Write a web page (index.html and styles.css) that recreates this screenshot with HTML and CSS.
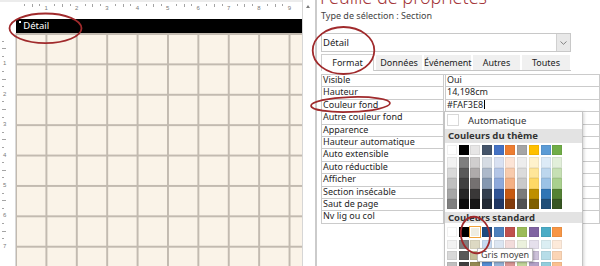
FILE: index.html
```html
<!DOCTYPE html>
<html lang="fr">
<head>
<meta charset="utf-8">
<title>Feuille de propriétés</title>
<link rel="stylesheet" href="styles.css">
</head>
<body>
<div class="screen">

  <!-- design view: rulers, section band, grid -->
  <section class="design">
    <div class="corner"></div>
    <div class="hruler">
      <span class="hseg"><b>1</b></span>
      <span class="hseg"><b>2</b></span>
      <span class="hseg"><b>3</b></span>
      <span class="hseg"><b>4</b></span>
      <span class="hseg"><b>5</b></span>
      <span class="hseg"><b>6</b></span>
      <span class="hseg"><b>7</b></span>
      <span class="hseg"><b>8</b></span>
      <span class="hseg"><b>9</b></span>
    </div>
    <div class="band"><span class="band-dot"></span>Détail</div>
    <div class="vruler">
      <span class="vseg"><b>1</b></span>
      <span class="vseg"><b>2</b></span>
      <span class="vseg"><b>3</b></span>
      <span class="vseg"><b>4</b></span>
      <span class="vseg"><b>5</b></span>
      <span class="vseg"><b>6</b></span>
      <span class="vseg"><b>7</b></span>
    </div>
    <div class="grid"></div>
  </section>

  <div class="vscroll"><span class="vscroll-up"></span></div>

  <!-- property sheet -->
  <section class="props">
    <h1 class="props-title">Feuille de propriétés</h1>
    <p class="sel-type">Type de sélection : Section</p>

    <div class="combo">
      <span class="combo-value">Détail</span>
      <span class="combo-btn">
        <svg width="7" height="4" viewBox="0 0 7 4"><polyline points="0.5,0.5 3.5,3.3 6.5,0.5" fill="none" stroke="#777" stroke-width="0.9"/></svg>
      </span>
    </div>

    <div class="tabs">
      <span class="tab tab-active">Format</span>
      <span class="tab tab-w46">Données</span>
      <span class="tab tab-w47">Événement</span>
      <span class="tab tab-w47">Autres</span>
      <span class="tab tab-w48">Toutes</span>
    </div>

    <div class="sheet">
      <div class="prop"><span class="prop-name">Visible</span><span class="prop-value">Oui</span></div>
      <div class="prop"><span class="prop-name">Hauteur</span><span class="prop-value">14,198cm</span></div>
      <div class="prop"><span class="prop-name">Couleur fond</span><span class="prop-value">#FAF3E8<i class="caret"></i></span></div>
      <div class="prop"><span class="prop-name">Autre couleur fond</span><span class="prop-value"></span></div>
      <div class="prop"><span class="prop-name">Apparence</span><span class="prop-value"></span></div>
      <div class="prop"><span class="prop-name">Hauteur automatique</span><span class="prop-value"></span></div>
      <div class="prop"><span class="prop-name">Auto extensible</span><span class="prop-value"></span></div>
      <div class="prop"><span class="prop-name">Auto réductible</span><span class="prop-value"></span></div>
      <div class="prop"><span class="prop-name">Afficher</span><span class="prop-value"></span></div>
      <div class="prop"><span class="prop-name">Section insécable</span><span class="prop-value"></span></div>
      <div class="prop"><span class="prop-name">Saut de page</span><span class="prop-value"></span></div>
      <div class="prop"><span class="prop-name">Nv lig ou col</span><span class="prop-value"></span></div>
    </div>

    <!-- colour picker drop-down -->
    <div class="picker">
      <div class="auto"><span class="auto-box"></span><span class="auto-label">Automatique</span></div>

      <div class="pick-head">Couleurs du thème</div>
      <div class="swatches swatches-base">
        <span style="background:#FFFFFF"></span><span style="background:#000000"></span><span style="background:#E7E6E6"></span><span style="background:#44546A"></span><span style="background:#4472C4"></span><span style="background:#ED7D31"></span><span style="background:#A5A5A5"></span><span style="background:#FFC000"></span><span style="background:#5B9BD5"></span><span style="background:#70AD47"></span>
      </div>
      <div class="swatches swatches-tints">
        <span style="background:#F2F2F2"></span><span style="background:#7F7F7F"></span><span style="background:#D0CECE"></span><span style="background:#D6DCE4"></span><span style="background:#D9E1F2"></span><span style="background:#FCE4D6"></span><span style="background:#EDEDED"></span><span style="background:#FFF2CC"></span><span style="background:#DDEBF7"></span><span style="background:#E2EFDA"></span>
        <span style="background:#D9D9D9"></span><span style="background:#595959"></span><span style="background:#AEAAAA"></span><span style="background:#ADB9CA"></span><span style="background:#B4C6E7"></span><span style="background:#F8CBAD"></span><span style="background:#DBDBDB"></span><span style="background:#FFE699"></span><span style="background:#BDD7EE"></span><span style="background:#C6E0B4"></span>
        <span style="background:#BFBFBF"></span><span style="background:#404040"></span><span style="background:#757171"></span><span style="background:#8497B0"></span><span style="background:#8EA9DB"></span><span style="background:#F4B084"></span><span style="background:#C9C9C9"></span><span style="background:#FFD966"></span><span style="background:#9BC2E6"></span><span style="background:#A9D08E"></span>
        <span style="background:#A6A6A6"></span><span style="background:#262626"></span><span style="background:#3A3838"></span><span style="background:#333F4F"></span><span style="background:#305496"></span><span style="background:#C65911"></span><span style="background:#7B7B7B"></span><span style="background:#BF8F00"></span><span style="background:#2F75B5"></span><span style="background:#548235"></span>
        <span style="background:#808080"></span><span style="background:#0D0D0D"></span><span style="background:#171616"></span><span style="background:#222A35"></span><span style="background:#203764"></span><span style="background:#833C0C"></span><span style="background:#525252"></span><span style="background:#806000"></span><span style="background:#1F4E78"></span><span style="background:#375623"></span>
      </div>

      <div class="pick-head pick-head-std">Couleurs standard</div>
      <div class="swatches swatches-std">
        <span style="background:#FFFFFF"></span><span style="background:#000000"></span><span class="sw-selected" style="background:#EEECE1"></span><span style="background:#1F497D"></span><span style="background:#4F81BD"></span><span style="background:#C0504D"></span><span style="background:#9BBB59"></span><span style="background:#8064A2"></span><span style="background:#4BACC6"></span><span style="background:#F79646"></span>
      </div>
      <div class="swatches swatches-std-tints">
        <span style="background:#F2F2F2"></span><span style="background:#7F7F7F"></span><span style="background:#DDD9C3"></span><span style="background:#C6D9F0"></span><span style="background:#DBE5F1"></span><span style="background:#F2DCDB"></span><span style="background:#EBF1DD"></span><span style="background:#E5E0EC"></span><span style="background:#DBEEF3"></span><span style="background:#FDEADA"></span>
        <span style="background:#D8D8D8"></span><span style="background:#595959"></span><span style="background:#C4BD97"></span><span style="background:#8DB3E2"></span><span style="background:#B8CCE4"></span><span style="background:#E5B9B7"></span><span style="background:#D7E3BC"></span><span style="background:#CCC1D9"></span><span style="background:#B7DDE8"></span><span style="background:#FBD5B5"></span>
        <span style="background:#BFBFBF"></span><span style="background:#3F3F3F"></span><span style="background:#938953"></span><span style="background:#548DD4"></span><span style="background:#95B3D7"></span><span style="background:#D99694"></span><span style="background:#C3D69B"></span><span style="background:#B2A2C7"></span><span style="background:#92CDDC"></span><span style="background:#FAC08F"></span>
      </div>
    </div>

    <div class="tip">Gris moyen</div>
  </section>
</div>

<!-- red hand-drawn annotations -->
<svg class="marks" width="600" height="266" viewBox="0 0 600 266">
  <ellipse cx="45.5" cy="28.3" rx="36" ry="14.8"/>
  <ellipse cx="343.5" cy="50.5" rx="30.8" ry="23.5"/>
  <ellipse cx="350.5" cy="104.5" rx="39.5" ry="7.4" transform="rotate(-2 350.5 104.5)"/>
  <ellipse cx="475.3" cy="235" rx="14.3" ry="18.4" transform="rotate(-12 475.3 235)"/>
</svg>
</body>
</html>
```

FILE: styles.css
```css
* { box-sizing: border-box; }

html, body { margin: 0; padding: 0; }

body { width: 600px; height: 266px; overflow: hidden; position: relative;
       background: #FFFFFF; color: #262626;
       font-family: "Noto Sans", "Open Sans", sans-serif; }

.screen { display: flex; height: 266px; }

/* ---------- design view ---------- */

.design { flex: none; width: 303px; height: 266px;
          display: grid; grid-template-columns: 16px 286px; grid-template-rows: 17px 16px 1fr;
          border-right: 1px solid #D6D6D6; box-shadow: inset 0 2px #ECECEC; }

.corner { grid-column: 1; grid-row: 1 / 3; }

.hruler { grid-column: 2; grid-row: 1; display: flex; }
.hseg   { flex: none; width: 30.4px; display: flex; justify-content: flex-end; align-items: flex-start;
          background-image: linear-gradient(#A4A4A4, #A4A4A4), linear-gradient(#A4A4A4, #A4A4A4), linear-gradient(#A4A4A4, #A4A4A4);
          background-size: 1px 2px, 1px 3px, 1px 2px;
          background-position: 8px 4px, 15.6px 4px, 23.2px 4px;
          background-repeat: no-repeat; }
.hseg b { font: normal 6px/6px "Liberation Sans", sans-serif; color: #7A7A7A; margin: 5px -1.5px 0 0; }

.band     { grid-column: 2; grid-row: 2; margin-top: 2px; height: 14px;
            display: flex; align-items: center; padding-left: 3px;
            background: #000000; color: #FFFFFF; font-size: 9.5px; line-height: 14px; }
.band-dot { width: 2px; height: 2px; background: #FFFFFF; align-self: flex-start; margin: 2px 2.3px 0 0; }

.vruler { grid-column: 1; grid-row: 3; display: flex; flex-direction: column;
          box-shadow: inset -1px 0 #D9D9D9; }
.vseg   { flex: none; height: 30.4px; display: flex; align-items: flex-end; padding-left: 3px;
          background-image: linear-gradient(#A4A4A4, #A4A4A4), linear-gradient(#A4A4A4, #A4A4A4), linear-gradient(#A4A4A4, #A4A4A4);
          background-size: 2px 1px, 4px 1px, 2px 1px;
          background-position: 2px 7.6px, 2px 15.2px, 2px 22.8px;
          background-repeat: no-repeat; }
.vseg b { font: normal 6px/6px "Liberation Sans", sans-serif; color: #7A7A7A; margin-bottom: -3px; }

.grid { grid-column: 2; grid-row: 3;
        background-color: #FAF3E8;
        background-image:
          linear-gradient(to right, transparent 28.2px, #FFFFFF 28.2px, #FFFFFF 28.8px, #C2BAB0 28.8px, #C2BAB0 30.4px),
          linear-gradient(to bottom, #C2BAB0 1.6px, #FFFFFF 1.6px, #FFFFFF 2.2px, transparent 2.2px);
        background-size: 30.4px 30.4px;
        background-position: 1px 0; }

.vscroll    { flex: none; width: 12px; padding: 5px 0 0 3px; }
.vscroll-up { display: block; width: 0; height: 0;
              border-left: 2.5px solid transparent; border-right: 2.5px solid transparent;
              border-bottom: 3px solid #7A7A7A; }

/* ---------- property sheet ---------- */

.props { flex: 1; position: relative; border-left: 2px solid #CBCBCB; padding-left: 4px; }

.props-title { margin: -13px 0 0 -1px; font-size: 18px; font-weight: 300; line-height: 20px;
               color: #A4373A; white-space: nowrap; }

.sel-type { margin: 3px 0 0 0; font-size: 9px; line-height: 11px; color: #444444; }

.combo       { margin-top: 12px; width: 250px; height: 19px; display: flex; align-items: stretch;
               border: 1px solid #C8C8C8; }
.combo-value { flex: 1; padding-left: 1px; font-size: 9.5px; line-height: 17px; color: #222222; }
.combo-btn   { width: 14px; display: flex; align-items: center; justify-content: center;
               background: #E8E8E8; border-left: 1px solid #D0D0D0; }

.tabs       { margin-top: 3px; width: 250px; height: 16px; display: flex; align-items: flex-end; gap: 2px;
              border-bottom: 1px solid #C6C6C6; }
.tab        { flex: none; height: 15px; background: #F0F0F0; text-align: center;
              font-size: 9px; line-height: 15px; color: #222222; }
.tab-active { width: 53px; height: 17px; margin-bottom: -1px; background: #FFFFFF;
              border: 1px solid #CFCFCF; border-bottom: none; line-height: 16px; }
.tab-w46    { width: 46px; }
.tab-w47    { width: 47px; }
.tab-w48    { width: 48px; }

.sheet { margin-top: 3px; border-top: 1px solid #CBCBCB; }
.prop  { display: grid; grid-template-columns: 123px 1fr; column-gap: 1px; height: 12.4px; }
.prop-name,
.prop-value { border: 1px solid #CBCBCB; border-top: none; padding: 0 1px;
              font-size: 9px; line-height: 10.6px; color: #262626; white-space: nowrap; }
.caret { display: inline-block; width: 1px; height: 9px; background: #000000; vertical-align: -1px; margin-left: 1px; }

/* colour picker */

.picker { position: absolute; left: 127px; top: 110.5px; width: 139px; height: 170px;
          background: #FFFFFF; border: 1px solid #C4C4C4;
          box-shadow: 1px 1px 3px rgba(0, 0, 0, 0.18); }

.auto       { height: 17.8px; display: flex; align-items: center; padding-left: 2px; }
.auto-box   { width: 12px; height: 12px; border: 1px solid #D8D8D8; background: #FFFFFF; }
.auto-label { margin-left: 9px; font-size: 9.5px; color: #333333; }

.pick-head     { height: 13.4px; padding-left: 3px; background: #E3E3E3;
                 font-size: 9.5px; font-weight: bold; line-height: 13.4px; color: #333333; }
.pick-head-std { margin-top: 2.2px; height: 11.6px; line-height: 11.6px; }

.swatches      { display: grid; grid-template-columns: repeat(10, 10px); column-gap: 1.7px; padding-left: 2px; }
.swatches span { display: block; box-shadow: inset 0 0 0 1px rgba(0, 0, 0, 0.06); }

.swatches-base      { margin-top: 2.3px; grid-auto-rows: 10px; }
.swatches-tints     { margin-top: 2.5px; grid-auto-rows: 10.4px; }
.swatches-std       { margin-top: 3.4px; grid-auto-rows: 10.5px; }
.swatches-std-tints { margin-top: 3px; grid-auto-rows: 9.2px; row-gap: 2px; }

.swatches .sw-selected { box-shadow: 0 0 0 1px #F2A33A, inset 0 0 0 1px #FFFFFF; }

.tip { position: absolute; left: 160px; top: 248px; padding: 0 3px;
       background: #FFFFFF; border: 1px solid #BDBDBD;
       font-size: 9px; line-height: 12px; color: #444444;
       box-shadow: 1px 1px 2px rgba(0, 0, 0, 0.2); }

/* annotations */

.marks         { position: absolute; left: 0; top: 0; pointer-events: none; }
.marks ellipse { fill: none; stroke: #A02A2C; stroke-width: 1.8; }
```
